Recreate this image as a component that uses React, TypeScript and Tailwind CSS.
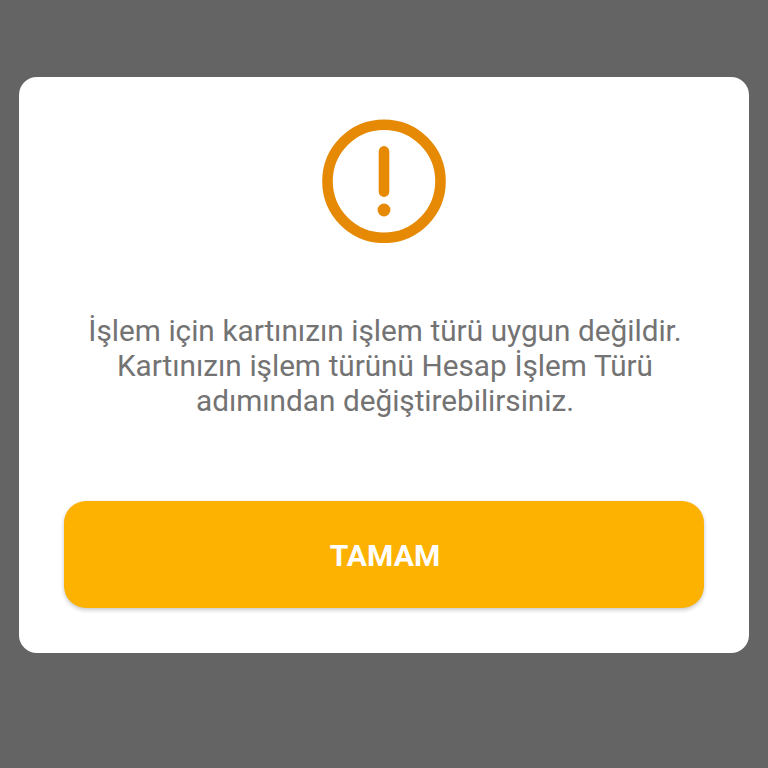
function WarningIcon() {
  return (
    <svg className="w-[124px] h-[124px]" viewBox="0 0 124 124" fill="none">
      <circle cx="62" cy="62.3" r="56.5" stroke="#e68a05" strokeWidth="10.6" />
      <path d="M62 32.4V72.6" stroke="#e68a05" strokeWidth="10.6" strokeLinecap="round" />
      <circle cx="62" cy="91" r="6.4" fill="#e68a05" />
    </svg>
  );
}

export default function App() {
  return (
    <div className="w-[768px] h-[768px] bg-[#646464] px-[19px] pt-[77px] font-[Roboto,sans-serif]">
      <div className="w-[730px] h-[576px] rounded-[18px] bg-white flex flex-col items-center pt-[42px]">
        <WarningIcon />
        <p className="mt-[70px] pl-[2px] text-center text-[29.75px] leading-[35.2px] tracking-[-0.04px] [word-spacing:0.4px] text-[#737373]">
          İşlem için kartınızın işlem türü uygun değildir.
          <br />
          Kartınızın işlem türünü Hesap İşlem Türü
          <br />
          adımından değiştirebilirsiniz.
        </p>
        <button className="mt-[82.4px] w-[640px] h-[107px] rounded-[22px] bg-[#fdb100] pt-[2px] pl-[2px] text-white text-[30px] font-bold tracking-[0.1px] shadow-[0_2px_4px_rgba(0,0,0,0.22)]">
          TAMAM
        </button>
      </div>
    </div>
  );
}
